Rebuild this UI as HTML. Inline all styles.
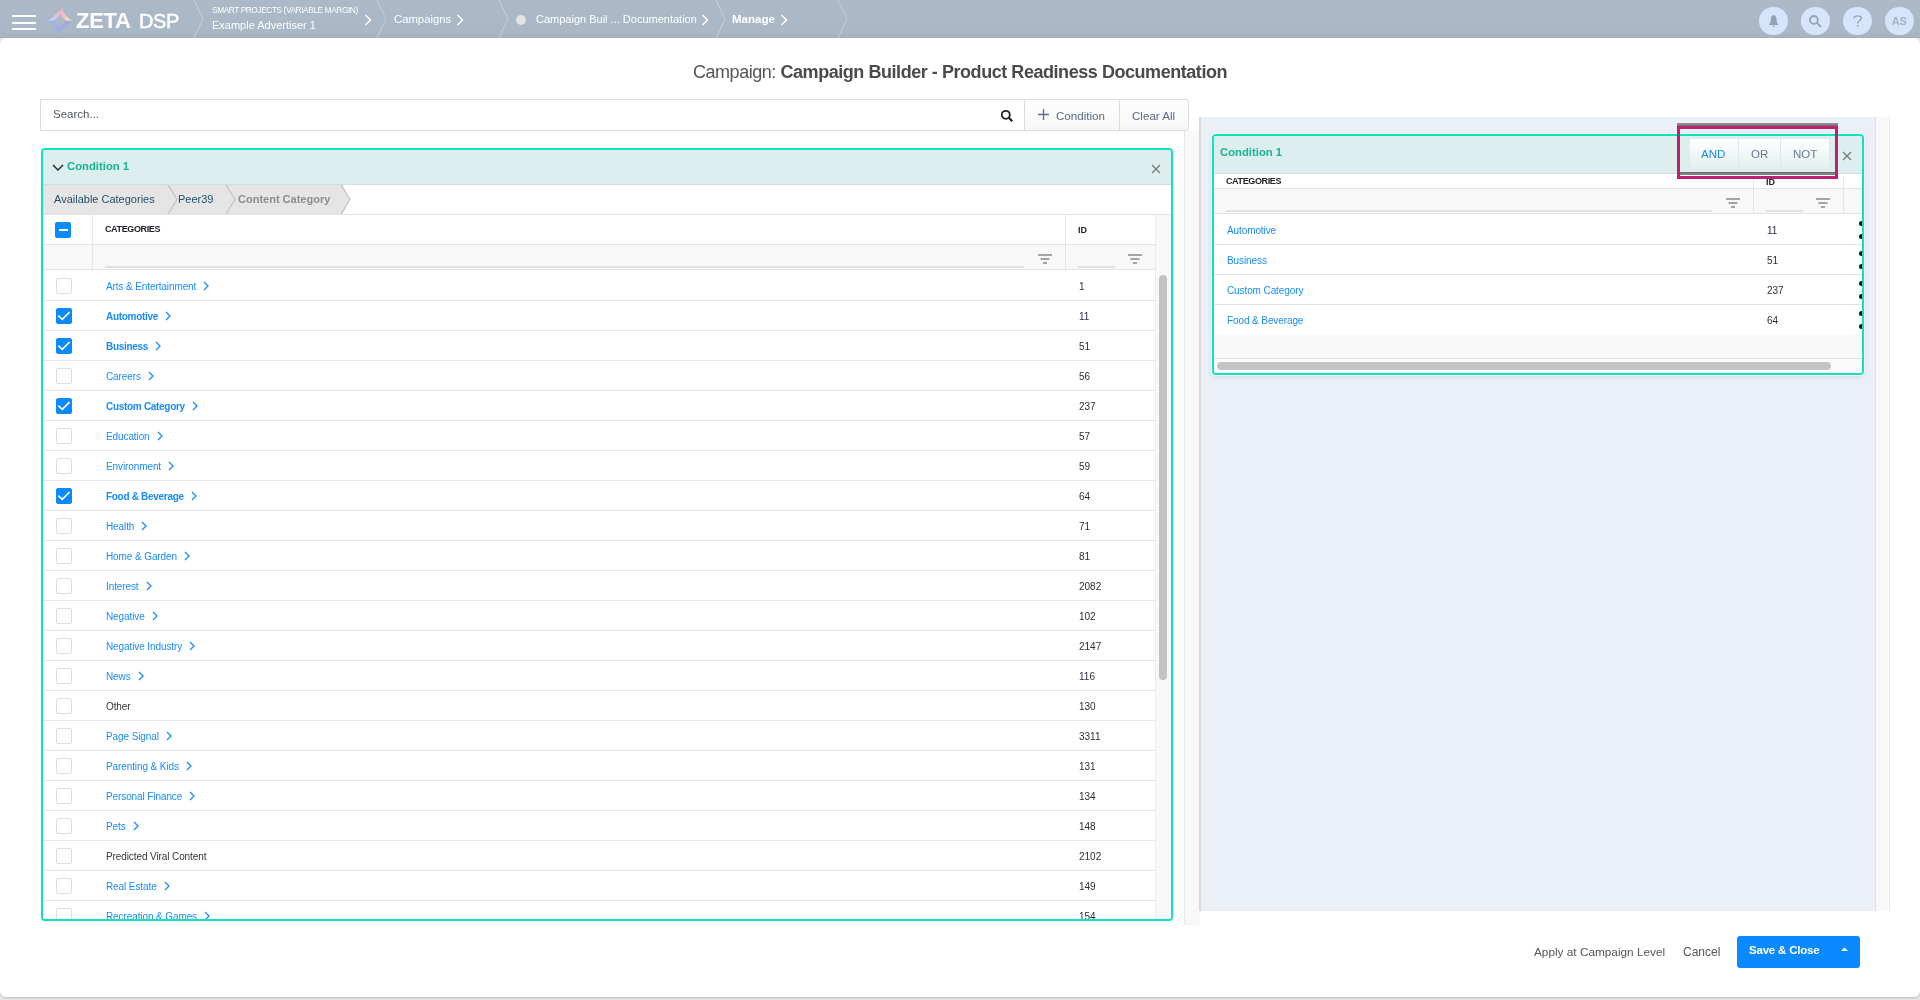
<!DOCTYPE html>
<html><head><meta charset="utf-8">
<style>
*{box-sizing:border-box;margin:0;padding:0}
html,body{width:1920px;height:1000px;overflow:hidden;-webkit-font-smoothing:antialiased;background:#e6e6e6;font-family:"Liberation Sans",sans-serif;}
.abs{position:absolute;white-space:nowrap}
#top{position:absolute;left:0;top:0;width:1920px;height:38px;will-change:transform;opacity:.999;background:linear-gradient(#abb9c9 0,#aab7c6 32px,#a9b3bf 36px,#a2acb6 38px);z-index:5}
#card{position:absolute;left:0;top:38px;width:1920px;height:959px;background:#fff;will-change:transform;opacity:.999;border-radius:6px;box-shadow:0 1px 2px rgba(0,0,0,.18);overflow:hidden}
.wt{color:#fff}
.sep{position:absolute;top:0}
.circ{position:absolute;top:6.5px;width:28.5px;height:28.5px;border-radius:50%;background:#d6e5fb}
.tchev{position:absolute;top:14px}
/* search */
#search{left:40px;top:61px;width:985px;height:32px;border:1px solid #dcdcdc;background:#fff}
.btn{position:absolute;top:61px;height:32px;border:1px solid #dcdcdc;background:linear-gradient(#fff,#f6f6f6);color:#5d6b88;font-size:11.6px;line-height:31px}
/* left panel */
#lp{position:absolute;left:41px;top:110px;width:1132px;height:773px;border:2px solid #0ae4c0;border-radius:4px;background:#fff;overflow:hidden}
#lph{position:absolute;left:0;top:0;width:1128px;height:35px;background:#dceeee;border-bottom:1px solid #d0dede}
.row{position:absolute;left:0;width:1112px;height:30px;border-bottom:1px solid #e6e6e6;background:#fff}
.cb{position:absolute;left:13px;top:7px;width:16px;height:16px;border:1.5px solid #dedede;border-radius:2px;background:#fff}
.cb.on{background:#0a8afe;border-color:#0a8afe;left:13px}
.cb.on svg{position:absolute;left:-1.5px;top:-1.5px}
.nm{position:absolute;left:63px;top:9.6px;font-size:10px;color:#188bfb;line-height:12px;letter-spacing:-.1px}
.nm.b{font-weight:bold;letter-spacing:-.3px}
.nm.plain{color:#35373f}
.chev{margin-left:7px;vertical-align:-1px}
.idv{position:absolute;left:1036px;top:10.2px;font-size:10px;color:#2b2e3c;line-height:12px}
/* right */
.rrow{position:absolute;left:0;width:649px;height:30px;border-bottom:1px solid #e3e3e3;background:#fff}
.rnm{position:absolute;left:13px;top:9.9px;font-size:10px;letter-spacing:-.1px;color:#188bfb;line-height:12px}
.rid{position:absolute;left:553px;top:9.9px;font-size:10px;color:#2b2e3c;line-height:12px}
.hdl{position:absolute;left:645px;top:6px;width:6px;height:19px}
.hdl:before,.hdl:after{content:"";position:absolute;left:0;width:6px;height:5px;background:#151522;border-radius:3px 0 0 3px}
.hdl:before{top:0}.hdl:after{top:13px}
.flt{position:absolute}
</style></head><body>
<div id="top">
  <div class="abs" style="left:12px;top:15px;width:24px;height:2px;background:#fff"></div>
  <div class="abs" style="left:12px;top:22px;width:24px;height:2px;background:#fff"></div>
  <div class="abs" style="left:12px;top:28px;width:24px;height:2px;background:#fff"></div>
  <svg class="abs" style="left:47px;top:7px" width="27" height="28" viewBox="0 0 27 28">
    <defs>
      <linearGradient id="lgt" x1="1" y1="0" x2="25" y2="0" gradientUnits="userSpaceOnUse"><stop offset="0" stop-color="#a3e2fb"/><stop offset=".35" stop-color="#d6c4e2"/><stop offset=".55" stop-color="#f1b3ca"/><stop offset=".75" stop-color="#f5cfc0"/><stop offset="1" stop-color="#fbf8b0"/></linearGradient>
      <linearGradient id="lgb" x1="1" y1="0" x2="25" y2="0" gradientUnits="userSpaceOnUse"><stop offset="0" stop-color="#9ab8ea"/><stop offset="1" stop-color="#a4a2e4"/></linearGradient>
    </defs>
    <path d="M1.1 13.9 L15.4 1.1 Q16.2 8.8 25.1 13.9 L20.1 13.9 Q15 11.6 14.3 7.2 L6.9 13.9 Z" fill="url(#lgt)"/>
    <path d="M1.1 13.7 L6.9 13.7 L12.3 20.5 L20.1 13.7 L25.1 13.7 L11.3 26.3 Q10.6 21.5 1.1 13.7 Z" fill="url(#lgb)"/>
  </svg>
  <div class="abs wt" style="left:76px;top:8px;font-size:22px;font-weight:bold;letter-spacing:-.3px">ZETA</div>
  <div class="abs wt" style="left:139px;top:9.5px;font-size:20px;letter-spacing:-.4px;-webkit-text-stroke:.5px #fff">DSP</div>
  <!-- separators -->
  <svg class="sep" style="left:193px" width="12" height="38"><path d="M1 0 L10 19 L1 38" fill="none" stroke="#c4cfdb" stroke-width="1"/></svg>
  <div class="abs" style="left:212px;top:5px;font-size:8.3px;color:#fff;letter-spacing:-.4px">SMART PROJECTS (VARIABLE MARGIN)</div>
  <div class="abs" style="left:212px;top:19px;font-size:11px;color:#fff">Example Advertiser 1</div>
  <svg class="tchev" style="left:364px" width="8" height="12"><path d="M1.5 1 L6.5 6 L1.5 11" fill="none" stroke="#fff" stroke-width="1.5"/></svg>
  <svg class="sep" style="left:376px" width="12" height="38"><path d="M1 0 L10 19 L1 38" fill="none" stroke="#c4cfdb" stroke-width="1"/></svg>
  <div class="abs" style="left:394px;top:13px;font-size:11.3px;color:#fff">Campaigns</div>
  <svg class="tchev" style="left:456px" width="8" height="12"><path d="M1.5 1 L6.5 6 L1.5 11" fill="none" stroke="#fff" stroke-width="1.5"/></svg>
  <svg class="sep" style="left:498px" width="12" height="38"><path d="M1 0 L10 19 L1 38" fill="none" stroke="#c4cfdb" stroke-width="1"/></svg>
  <div class="abs" style="left:516px;top:15px;width:10px;height:10px;border-radius:50%;background:#e3e3e3"></div>
  <div class="abs" style="left:536px;top:13px;font-size:11px;color:#fff">Campaign Buil ... Documentation</div>
  <svg class="tchev" style="left:701px" width="8" height="12"><path d="M1.5 1 L6.5 6 L1.5 11" fill="none" stroke="#fff" stroke-width="1.5"/></svg>
  <svg class="sep" style="left:715px" width="12" height="38"><path d="M1 0 L10 19 L1 38" fill="none" stroke="#c4cfdb" stroke-width="1"/></svg>
  <div class="abs" style="left:732px;top:13px;font-size:11.5px;color:#fff;font-weight:bold">Manage</div>
  <svg class="tchev" style="left:780px" width="8" height="12"><path d="M1.5 1 L6.5 6 L1.5 11" fill="none" stroke="#fff" stroke-width="1.5"/></svg>
  <svg class="sep" style="left:837px" width="12" height="38"><path d="M1 0 L10 19 L1 38" fill="none" stroke="#c4cfdb" stroke-width="1"/></svg>
  <!-- right icons -->
  <div class="circ" style="left:1759px"><svg width="29" height="29" viewBox="0 1 29 29"><path d="M14 9.2 C12.6 9.6 12 11.3 11.8 13.5 L11.4 16.6 L9.8 18.9 L19.6 18.9 L18 16.6 L17.6 13.5 C17.4 11.3 16.8 9.6 15.4 9.2 Z" fill="#96a2b3"/><rect x="13.9" y="19.4" width="1.7" height="1.4" fill="#96a2b3"/></svg></div>
  <div class="circ" style="left:1801px"><svg width="29" height="29" viewBox="0 1 29 29"><circle cx="12.9" cy="13.9" r="3.9" fill="none" stroke="#96a2b3" stroke-width="1.8"/><path d="M15.8 16.9 L19.5 20.4" stroke="#96a2b3" stroke-width="1.9" stroke-linecap="round"/></svg></div>
  <div class="circ" style="left:1843px"><svg width="29" height="29" viewBox="0 1 29 29"><path d="M11 12.3 C11.2 10.6 12.6 9.9 14.8 9.9 C16.9 9.9 18.3 10.8 18.3 12.2 C18.3 14.3 15.1 14.6 14.8 17 L14.7 17.6" fill="none" stroke="#96a2b3" stroke-width="1.3"/><rect x="13.9" y="19" width="1.5" height="1.5" fill="#96a2b3"/></svg></div>
  <div class="circ" style="left:1885px"><div class="abs" style="left:0;top:8.5px;width:28.5px;text-align:center;font-size:11px;font-weight:bold;color:#a4b1c1;letter-spacing:-.2px">AS</div></div>
</div>

<div id="card">
  <div class="abs" style="left:0;top:24px;width:1920px;text-align:center;font-size:18px;color:#555;line-height:20px;letter-spacing:-.45px;padding-left:0">Campaign: <b style="color:#4a4a4a">Campaign Builder - Product Readiness Documentation</b></div>

  <div id="search" class="abs">
    <div class="abs" style="left:12px;top:8px;font-size:11.5px;color:#525663">Search...</div>
    <svg class="abs" style="left:959px;top:9px" width="14" height="14" viewBox="0 0 14 14"><circle cx="5.8" cy="5.8" r="4" fill="none" stroke="#222" stroke-width="1.8"/><path d="M8.8 8.8 L12.3 12.3" stroke="#222" stroke-width="2.2"/></svg>
  </div>
  <div class="btn" style="left:1024px;width:96px;padding-left:31px"><svg class="abs" style="left:13px;top:9px" width="11" height="11" viewBox="0 0 11 11"><path d="M5.5 0 V11 M0 5.5 H11" stroke="#5d6b88" stroke-width="1.3"/></svg>Condition</div>
  <div class="btn" style="left:1119px;width:70px;padding-left:12px;border-radius:0 3px 3px 0">Clear All</div>

  <!-- left panel -->
  <div id="lp">
    <div id="lph">
      <svg class="abs" style="left:9px;top:14px" width="12" height="8" viewBox="0 0 12 8"><path d="M1 1 L6 6 L11 1" fill="none" stroke="#222" stroke-width="1.4"/></svg>
      <div class="abs" style="left:24px;top:10px;font-size:11.3px;font-weight:bold;color:#17b498">Condition 1</div>
      <svg class="abs" style="left:1108px;top:14px" width="10" height="10" viewBox="0 0 10 10"><path d="M1 1 L9 9 M9 1 L1 9" stroke="#777" stroke-width="1.2"/></svg>
    </div>
    <!-- breadcrumb -->
    <div class="abs" style="left:0;top:35px;width:303px;height:29px;background:#e5e5e5"></div>
    <svg class="abs" style="left:120px;top:35px" width="195" height="29" viewBox="0 0 195 29">
      <path d="M5 0 L14 14.5 L5 29" fill="none" stroke="#c6c6c6" stroke-width="1.4"/>
      <path d="M63 0 L72 14.5 L63 29" fill="none" stroke="#c6c6c6" stroke-width="1.4"/>
      <path d="M174 -1 L178 -1 L187 14.5 L178 30 L174 30 Z" fill="#e5e5e5"/>
      <path d="M179 -1 L188 14.5 L179 30 L195 30 L195 -1 Z" fill="#fff"/>
      <path d="M178 0 L187 14.5 L178 29" fill="none" stroke="#c6c6c6" stroke-width="1.4"/>
    </svg>
    <div class="abs" style="left:11px;top:43px;font-size:11px;color:#24506c">Available Categories</div>
    <div class="abs" style="left:135px;top:43px;font-size:11px;color:#24506c">Peer39</div>
    <div class="abs" style="left:195px;top:43px;font-size:11px;color:#8c8c8c;font-weight:bold">Content Category</div>
    <!-- table header -->
    <div class="abs" style="left:0;top:64px;width:1128px;height:1px;background:#e3e3e3"></div>
    <div class="abs" style="left:0;top:94px;width:1112px;height:1px;background:#e3e3e3"></div>
    <div class="abs" style="left:0;top:95px;width:1112px;height:25px;background:#f8f8f8;border-bottom:1px solid #e3e3e3"></div>
    <div class="abs" style="left:49px;top:65px;width:1px;height:56px;background:#e6e6e6"></div>
    <div class="abs" style="left:1022px;top:65px;width:1px;height:56px;background:#e6e6e6"></div>
    <div class="abs" style="left:1112px;top:65px;width:1px;height:56px;background:#e6e6e6"></div>
    <div class="abs" style="left:12px;top:72px;width:16px;height:16px;border-radius:2px;background:#0a8afe"><div class="abs" style="left:3.5px;top:7px;width:9px;height:2px;background:#fff"></div></div>
    <div class="abs" style="left:62px;top:74px;font-size:9px;font-weight:bold;color:#22242c;letter-spacing:-.38px">CATEGORIES</div>
    <div class="abs" style="left:1035px;top:75px;font-size:9px;font-weight:bold;color:#22242c">ID</div>
    <div class="abs" style="left:62px;top:116px;width:919px;height:2px;background:#e2e2e2"></div>
    <svg class="flt" style="left:995px;top:104px" width="14" height="11" viewBox="0 0 14 11"><path d="M0 1 H14 M2.5 5 H11.5 M5 9 H9" stroke="#888" stroke-width="1.3"/></svg>
    <div class="abs" style="left:1035px;top:116px;width:37px;height:2px;background:#e2e2e2"></div>
    <svg class="flt" style="left:1085px;top:104px" width="14" height="11" viewBox="0 0 14 11"><path d="M0 1 H14 M2.5 5 H11.5 M5 9 H9" stroke="#888" stroke-width="1.3"/></svg>
    <!-- scroll track -->
    <div class="abs" style="left:1112px;top:65px;width:16px;height:708px;background:#f8f8f8;border-left:1px solid #ececec"></div>
    <div class="abs" style="left:1116px;top:125px;width:8px;height:405px;border-radius:4px;background:#c2c2c2"></div>
    <div class="abs" style="left:0;top:0;width:0;height:0">
    </div>
    <div class="abs" style="left:0;top:-150px;width:1112px;height:923px">
<div class="row" style="top:271px"><div class="cb"></div><div class="nm">Arts &amp; Entertainment<svg class="chev" width="6" height="10" viewBox="0 0 6 10"><path d="M1 1 L5 5 L1 9" fill="none" stroke="#188bfb" stroke-width="1.3"/></svg></div><div class="idv">1</div></div>
<div class="row" style="top:301px"><div class="cb on"><svg width="16" height="16" viewBox="0 0 16 16"><path d="M2.3 7.6 L6.3 11.4 L13.6 4" fill="none" stroke="#fff" stroke-width="1.7"/></svg></div><div class="nm b">Automotive<svg class="chev" width="6" height="10" viewBox="0 0 6 10"><path d="M1 1 L5 5 L1 9" fill="none" stroke="#188bfb" stroke-width="1.3"/></svg></div><div class="idv">11</div></div>
<div class="row" style="top:331px"><div class="cb on"><svg width="16" height="16" viewBox="0 0 16 16"><path d="M2.3 7.6 L6.3 11.4 L13.6 4" fill="none" stroke="#fff" stroke-width="1.7"/></svg></div><div class="nm b">Business<svg class="chev" width="6" height="10" viewBox="0 0 6 10"><path d="M1 1 L5 5 L1 9" fill="none" stroke="#188bfb" stroke-width="1.3"/></svg></div><div class="idv">51</div></div>
<div class="row" style="top:361px"><div class="cb"></div><div class="nm">Careers<svg class="chev" width="6" height="10" viewBox="0 0 6 10"><path d="M1 1 L5 5 L1 9" fill="none" stroke="#188bfb" stroke-width="1.3"/></svg></div><div class="idv">56</div></div>
<div class="row" style="top:391px"><div class="cb on"><svg width="16" height="16" viewBox="0 0 16 16"><path d="M2.3 7.6 L6.3 11.4 L13.6 4" fill="none" stroke="#fff" stroke-width="1.7"/></svg></div><div class="nm b">Custom Category<svg class="chev" width="6" height="10" viewBox="0 0 6 10"><path d="M1 1 L5 5 L1 9" fill="none" stroke="#188bfb" stroke-width="1.3"/></svg></div><div class="idv">237</div></div>
<div class="row" style="top:421px"><div class="cb"></div><div class="nm">Education<svg class="chev" width="6" height="10" viewBox="0 0 6 10"><path d="M1 1 L5 5 L1 9" fill="none" stroke="#188bfb" stroke-width="1.3"/></svg></div><div class="idv">57</div></div>
<div class="row" style="top:451px"><div class="cb"></div><div class="nm">Environment<svg class="chev" width="6" height="10" viewBox="0 0 6 10"><path d="M1 1 L5 5 L1 9" fill="none" stroke="#188bfb" stroke-width="1.3"/></svg></div><div class="idv">59</div></div>
<div class="row" style="top:481px"><div class="cb on"><svg width="16" height="16" viewBox="0 0 16 16"><path d="M2.3 7.6 L6.3 11.4 L13.6 4" fill="none" stroke="#fff" stroke-width="1.7"/></svg></div><div class="nm b">Food &amp; Beverage<svg class="chev" width="6" height="10" viewBox="0 0 6 10"><path d="M1 1 L5 5 L1 9" fill="none" stroke="#188bfb" stroke-width="1.3"/></svg></div><div class="idv">64</div></div>
<div class="row" style="top:511px"><div class="cb"></div><div class="nm">Health<svg class="chev" width="6" height="10" viewBox="0 0 6 10"><path d="M1 1 L5 5 L1 9" fill="none" stroke="#188bfb" stroke-width="1.3"/></svg></div><div class="idv">71</div></div>
<div class="row" style="top:541px"><div class="cb"></div><div class="nm">Home &amp; Garden<svg class="chev" width="6" height="10" viewBox="0 0 6 10"><path d="M1 1 L5 5 L1 9" fill="none" stroke="#188bfb" stroke-width="1.3"/></svg></div><div class="idv">81</div></div>
<div class="row" style="top:571px"><div class="cb"></div><div class="nm">Interest<svg class="chev" width="6" height="10" viewBox="0 0 6 10"><path d="M1 1 L5 5 L1 9" fill="none" stroke="#188bfb" stroke-width="1.3"/></svg></div><div class="idv">2082</div></div>
<div class="row" style="top:601px"><div class="cb"></div><div class="nm">Negative<svg class="chev" width="6" height="10" viewBox="0 0 6 10"><path d="M1 1 L5 5 L1 9" fill="none" stroke="#188bfb" stroke-width="1.3"/></svg></div><div class="idv">102</div></div>
<div class="row" style="top:631px"><div class="cb"></div><div class="nm">Negative Industry<svg class="chev" width="6" height="10" viewBox="0 0 6 10"><path d="M1 1 L5 5 L1 9" fill="none" stroke="#188bfb" stroke-width="1.3"/></svg></div><div class="idv">2147</div></div>
<div class="row" style="top:661px"><div class="cb"></div><div class="nm">News<svg class="chev" width="6" height="10" viewBox="0 0 6 10"><path d="M1 1 L5 5 L1 9" fill="none" stroke="#188bfb" stroke-width="1.3"/></svg></div><div class="idv">116</div></div>
<div class="row" style="top:691px"><div class="cb"></div><div class="nm plain">Other</div><div class="idv">130</div></div>
<div class="row" style="top:721px"><div class="cb"></div><div class="nm">Page Signal<svg class="chev" width="6" height="10" viewBox="0 0 6 10"><path d="M1 1 L5 5 L1 9" fill="none" stroke="#188bfb" stroke-width="1.3"/></svg></div><div class="idv">3311</div></div>
<div class="row" style="top:751px"><div class="cb"></div><div class="nm">Parenting &amp; Kids<svg class="chev" width="6" height="10" viewBox="0 0 6 10"><path d="M1 1 L5 5 L1 9" fill="none" stroke="#188bfb" stroke-width="1.3"/></svg></div><div class="idv">131</div></div>
<div class="row" style="top:781px"><div class="cb"></div><div class="nm">Personal Finance<svg class="chev" width="6" height="10" viewBox="0 0 6 10"><path d="M1 1 L5 5 L1 9" fill="none" stroke="#188bfb" stroke-width="1.3"/></svg></div><div class="idv">134</div></div>
<div class="row" style="top:811px"><div class="cb"></div><div class="nm">Pets<svg class="chev" width="6" height="10" viewBox="0 0 6 10"><path d="M1 1 L5 5 L1 9" fill="none" stroke="#188bfb" stroke-width="1.3"/></svg></div><div class="idv">148</div></div>
<div class="row" style="top:841px"><div class="cb"></div><div class="nm plain">Predicted Viral Content</div><div class="idv">2102</div></div>
<div class="row" style="top:871px"><div class="cb"></div><div class="nm">Real Estate<svg class="chev" width="6" height="10" viewBox="0 0 6 10"><path d="M1 1 L5 5 L1 9" fill="none" stroke="#188bfb" stroke-width="1.3"/></svg></div><div class="idv">149</div></div>
<div class="row" style="top:901px"><div class="cb"></div><div class="nm">Recreation &amp; Games<svg class="chev" width="6" height="10" viewBox="0 0 6 10"><path d="M1 1 L5 5 L1 9" fill="none" stroke="#188bfb" stroke-width="1.3"/></svg></div><div class="idv">154</div></div>
    </div>
  </div>

  <!-- middle strip -->
  <div class="abs" style="left:1184px;top:93px;width:16px;height:794px;background:#f8f8f8;border-left:1px solid #e8e8e8"></div>
  <!-- right panel -->
  <div class="abs" style="left:1199px;top:79px;width:676px;height:794px;background:#ebf0f8;border-left:2px solid #d9d9d9"></div>
  <div class="abs" style="left:1875px;top:79px;width:15px;height:794px;background:#f9f9f9;border-left:1px solid #e2e2e2;border-right:1px solid #eaeaea"></div>

  <div class="abs" style="left:1212px;top:96px;width:652px;height:241px;border:2px solid #0ae4c0;border-radius:4px;background:#fff;overflow:hidden;box-shadow:0 0 0 1px #fff,0 2px 6px rgba(0,0,0,.09)">
    <div class="abs" style="left:0;top:0;width:648px;height:38px;background:#dceeee;border-bottom:1px solid #d2dfdf"></div>
    <div class="abs" style="left:6px;top:10px;font-size:11.3px;font-weight:bold;color:#17b498">Condition 1</div>
    <svg class="abs" style="left:628px;top:15px" width="10" height="10" viewBox="0 0 10 10"><path d="M1 1 L9 9 M9 1 L1 9" stroke="#777" stroke-width="1.2"/></svg>
    <div class="abs" style="left:0;top:39px;width:648px;height:14px;background:#fff"></div>
    <div class="abs" style="left:12px;top:40px;font-size:9px;font-weight:bold;color:#22242c;letter-spacing:-.38px">CATEGORIES</div>
    <div class="abs" style="left:552px;top:41px;font-size:9px;font-weight:bold;color:#22242c">ID</div>
    <div class="abs" style="left:0;top:52px;width:648px;height:26px;background:#f8f8f8;border-top:1px solid #e3e3e3;border-bottom:1px solid #e3e3e3"></div>
    <div class="abs" style="left:539px;top:39px;width:1px;height:39px;background:#e6e6e6"></div>
    <div class="abs" style="left:629px;top:39px;width:1px;height:39px;background:#e6e6e6"></div>
    <div class="abs" style="left:12px;top:74px;width:486px;height:2px;background:#e2e2e2"></div>
    <svg class="flt" style="left:512px;top:62px" width="14" height="11" viewBox="0 0 14 11"><path d="M0 1 H14 M2.5 5 H11.5 M5 9 H9" stroke="#888" stroke-width="1.3"/></svg>
    <div class="abs" style="left:552px;top:74px;width:37px;height:2px;background:#e2e2e2"></div>
    <svg class="flt" style="left:602px;top:62px" width="14" height="11" viewBox="0 0 14 11"><path d="M0 1 H14 M2.5 5 H11.5 M5 9 H9" stroke="#888" stroke-width="1.3"/></svg>
    <div class="abs" style="left:0;top:-135px;width:648px;height:400px">
<div class="rrow" style="top:214px"><div class="rnm">Automotive</div><div class="rid">11</div><div class="hdl"></div></div>
<div class="rrow" style="top:244px"><div class="rnm">Business</div><div class="rid">51</div><div class="hdl"></div></div>
<div class="rrow" style="top:274px"><div class="rnm">Custom Category</div><div class="rid">237</div><div class="hdl"></div></div>
<div class="rrow" style="top:304px"><div class="rnm">Food &amp; Beverage</div><div class="rid">64</div><div class="hdl"></div></div>
    </div>
    <div class="abs" style="left:0;top:198px;width:648px;height:25px;background:#f9f9f9;border-bottom:1px solid #e2e2e2"></div><div class="abs" style="left:0;top:223px;width:648px;height:20px;background:#fbfbfb"></div>
    <div class="abs" style="left:3px;top:226px;width:614px;height:8px;border-radius:4px;background:#c4c4c4"></div>
  </div>

  <!-- and/or/not popup -->
  <div class="abs" style="left:1677px;top:85px;width:161px;height:3px;background:linear-gradient(#9a9a9a,#6c6c6c)"></div>
  <div class="abs" style="left:1677px;top:88px;width:161px;height:53px;border:3px solid #be1f70"></div>
  <div class="abs" style="left:1680px;top:134px;width:155px;height:3px;background:linear-gradient(#6c6c6c,#8a8a8a)"></div>
  <div class="abs" style="left:1689px;top:100px;width:141px;height:32px;border:1px solid #e3e9e9;background:linear-gradient(#feffff,#e3eeee)"></div>
  <div class="abs" style="left:1738px;top:101px;width:1px;height:30px;background:#dfe6e6"></div>
  <div class="abs" style="left:1780px;top:101px;width:1px;height:30px;background:#dfe6e6"></div>
  <div class="abs" style="left:1701px;top:110px;font-size:11.5px;color:#188bfb">AND</div>
  <div class="abs" style="left:1751px;top:110px;font-size:11.5px;color:#6b7894">OR</div>
  <div class="abs" style="left:1793px;top:110px;font-size:11.5px;color:#6b7894">NOT</div>

  <!-- footer -->
  <div class="abs" style="left:1534px;top:907px;font-size:11.8px;color:#555">Apply at Campaign Level</div>
  <div class="abs" style="left:1683px;top:907px;font-size:12px;color:#555">Cancel</div>
  <div class="abs" style="left:1737px;top:898px;width:123px;height:32px;border-radius:3px;background:#0a8afe"></div>
  <div class="abs" style="left:1749px;top:906px;font-size:11.5px;font-weight:bold;color:#fff;letter-spacing:-.2px">Save &amp; Close</div>
  <svg class="abs" style="left:1841px;top:909px" width="7" height="5" viewBox="0 0 7 5"><path d="M0 4 L3.5 0.5 L7 4 Z" fill="#fff"/></svg>
</div>
</body></html>
